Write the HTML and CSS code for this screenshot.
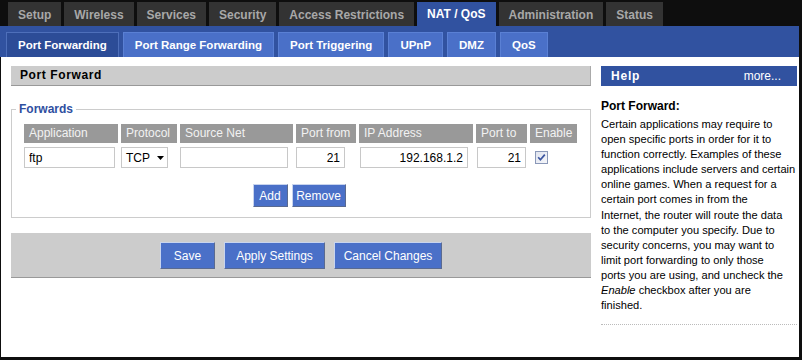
FILE: index.html
```html
<!DOCTYPE html>
<html lang="en">

<head>
    <meta charset="UTF-8">
    <title>Port Forwarding</title>
    <link rel="stylesheet" href="styles.css">
</head>

<body>
    <div id="page">
        <div class="main-tabs">
            <div class="tab">Setup</div>
            <div class="tab">Wireless</div>
            <div class="tab">Services</div>
            <div class="tab">Security</div>
            <div class="tab">Access Restrictions</div>
            <div class="tab current">NAT / QoS</div>
            <div class="tab">Administration</div>
            <div class="tab">Status</div>
        </div>
        <div class="sub-bar">
            <div class="subtab current">Port Forwarding</div>
            <div class="subtab">Port Range Forwarding</div>
            <div class="subtab">Port Triggering</div>
            <div class="subtab">UPnP</div>
            <div class="subtab">DMZ</div>
            <div class="subtab">QoS</div>
        </div>

        <div id="content">
            <div class="main">
                <h2 class="section-title">Port Forward</h2>

                <fieldset class="forwards">
                    <legend>Forwards</legend>
                    <div class="grid">
                        <div class="th">Application</div>
                        <div class="th">Protocol</div>
                        <div class="th">Source Net</div>
                        <div class="th">Port from</div>
                        <div class="th">IP Address</div>
                        <div class="th">Port to</div>
                        <div class="th">Enable</div>

                        <div class="td"><input class="field app" type="text" value="ftp"></div>
                        <div class="td">
                            <div class="select">
                                <span>TCP</span>
                                <svg width="7" height="4" viewBox="0 0 7 4"><path d="M0 0h7L3.5 4z" fill="#000"/></svg>
                            </div>
                        </div>
                        <div class="td"><input class="field src" type="text" value=""></div>
                        <div class="td"><input class="field num port-from" type="text" value="21"></div>
                        <div class="td"><input class="field num ip" type="text" value="192.168.1.2"></div>
                        <div class="td"><input class="field num port-to" type="text" value="21"></div>
                        <div class="td">
                            <svg class="check" width="13" height="13" viewBox="0 0 13 13">
                                <defs>
                                    <linearGradient id="boxfill" x1="0" y1="0" x2="1" y2="1">
                                        <stop offset="0" stop-color="#dfe3ee"/>
                                        <stop offset="1" stop-color="#f6f7fa"/>
                                    </linearGradient>
                                </defs>
                                <rect x="0.5" y="0.5" width="12" height="12" fill="url(#boxfill)" stroke="#8a98b8"/>
                                <path d="M3.2 6.3l2.2 2.5L9.8 3.6" fill="none" stroke="#3b55a0" stroke-width="1.7"/>
                            </svg>
                        </div>
                    </div>
                    <div class="row-buttons">
                        <button class="btn add">Add</button>
                        <button class="btn remove">Remove</button>
                    </div>
                </fieldset>

                <div class="submit-bar">
                    <button class="btn big save">Save</button>
                    <button class="btn big apply">Apply Settings</button>
                    <button class="btn big cancel">Cancel Changes</button>
                </div>
            </div>

            <div class="help">
                <div class="help-head">
                    <span class="help-title">Help</span>
                    <span class="more">more...</span>
                </div>
                <h3>Port Forward:</h3>
                <p>Certain applications may require to<br>
                    open specific ports in order for it to<br>
                    function correctly. Examples of these<br>
                    applications include servers and certain<br>
                    online games. When a request for a<br>
                    certain port comes in from the<br>
                    Internet, the router will route the data<br>
                    to the computer you specify. Due to<br>
                    security concerns, you may want to<br>
                    limit port forwarding to only those<br>
                    ports you are using, and uncheck the<br>
                    <em>Enable</em> checkbox after you are<br>
                    finished.</p>
                <div class="dots"></div>
            </div>
        </div>
    </div>
</body>

</html>
```

FILE: styles.css
```css
body {
    margin: 0;
    background-color: #0e0e0e;
    font-family: Tahoma, "Liberation Sans", Arial, sans-serif;
    font-size: 11px;
    color: #000;
}

#page {
    width: 799px;
}

.main-tabs {
    display: flex;
    gap: 3px;
    padding: 2px 0 0 8px;
    height: 24px;
}

.tab {
    height: 24px;
    line-height: 27px;
    padding: 0 10px;
    background-color: #333;
    color: #a8a8a8;
    font-weight: bold;
    font-size: 12px;
}

.tab.current {
    background-color: #3152a0;
    color: #fff;
    line-height: 24px;
}

.sub-bar {
    display: flex;
    gap: 4px;
    background-color: #3152a0;
    padding: 6px 0 0 6px;
    height: 25px;
}

.subtab {
    height: 24px;
    line-height: 25px;
    padding: 0 11px;
    background-color: #4a70c8;
    border: 1px solid #5a80d4;
    border-bottom: none;
    color: #fff;
    font-weight: bold;
    font-size: 11.5px;
}

.subtab.current {
    background-color: #2c4c97;
    border-color: #4e6fba;
}

#content {
    display: flex;
    gap: 10px;
    margin-left: 1px;
    width: 798px;
    height: 300px;
    padding: 9px 0 0 10px;
    box-sizing: border-box;
    background-color: #fff;
}

.main {
    width: 580px;
}

.section-title {
    margin: 0;
    height: 19px;
    line-height: 19px;
    padding-left: 9px;
    background-color: #ccc;
    border-bottom: 1px solid #999;
    border-right: 1px solid #aaa;
    font-size: 12px;
    letter-spacing: 0.6px;
}

.forwards {
    margin: 16px 0 0 0;
    padding: 8px 12px 10px 12px;
    border: 1px solid #ccc;
}

.forwards legend {
    padding: 0 3px;
    margin-left: -8px;
    color: #2f4f9f;
    font-weight: bold;
    font-size: 12px;
}

.grid {
    display: grid;
    grid-template-columns: 94px 56px 113px 60px 114px 51px 47px;
    column-gap: 3px;
    row-gap: 4px;
}

.th {
    height: 19px;
    line-height: 19px;
    padding-left: 5px;
    background-color: #999;
    color: #f2f2f2;
    font-size: 12px;
}

.td {
    height: 21px;
    display: flex;
    align-items: center;
}

.field {
    box-sizing: border-box;
    height: 21px;
    border: 1px solid #c8c8c8;
    padding: 0 4px;
    font-family: inherit;
    font-size: 12px;
    color: #000;
    background: #fff;
}

.app {
    width: 91px;
}

.src {
    width: 108px;
}

.num {
    text-align: right;
}

.port-from {
    width: 49px;
}

.ip {
    width: 108px;
    margin-left: 1px;
}

.port-to {
    width: 49px;
    margin-left: 1px;
}

.select {
    box-sizing: border-box;
    width: 47px;
    height: 21px;
    border: 1px solid #c8c8c8;
    display: flex;
    align-items: center;
    justify-content: space-between;
    padding: 0 3px 0 4px;
    font-size: 12px;
}

.check {
    margin-left: 5px;
}

.row-buttons {
    display: flex;
    justify-content: center;
    gap: 4px;
    margin-top: 16px;
    padding-right: 4px;
}

.btn {
    height: 23px;
    padding: 0;
    background-color: #4a70c8;
    color: #fff;
    font-family: inherit;
    font-size: 12px;
    border: 1px solid;
    border-color: #c8d4ee #5a6a90 #5a6a90 #c8d4ee;
    cursor: pointer;
}

.add {
    width: 35px;
}

.remove {
    width: 54px;
}

.submit-bar {
    display: flex;
    justify-content: center;
    gap: 9px;
    margin-top: 15px;
    padding: 9px 0 8px 0;
    background-color: #ccc;
    border-bottom: 1px solid #999;
}

.btn.big {
    height: 27px;
}

.save {
    width: 55px;
}

.apply {
    width: 101px;
}

.cancel {
    width: 108px;
}

.help {
    width: 196px;
}

.help-head {
    display: flex;
    justify-content: space-between;
    align-items: center;
    height: 20px;
    padding: 0 16px 0 10px;
    background-color: #3152a0;
    color: #fff;
    font-size: 12px;
}

.help-title {
    font-weight: bold;
    letter-spacing: 0.8px;
}

.help h3 {
    margin: 13px 0 4px 0;
    font-size: 12px;
}

.help p {
    margin: 0;
    font-size: 11.1px;
    line-height: 15.1px;
    white-space: nowrap;
}

.dots {
    margin-top: 11px;
    border-top: 1px dotted #bbb;
}
```
